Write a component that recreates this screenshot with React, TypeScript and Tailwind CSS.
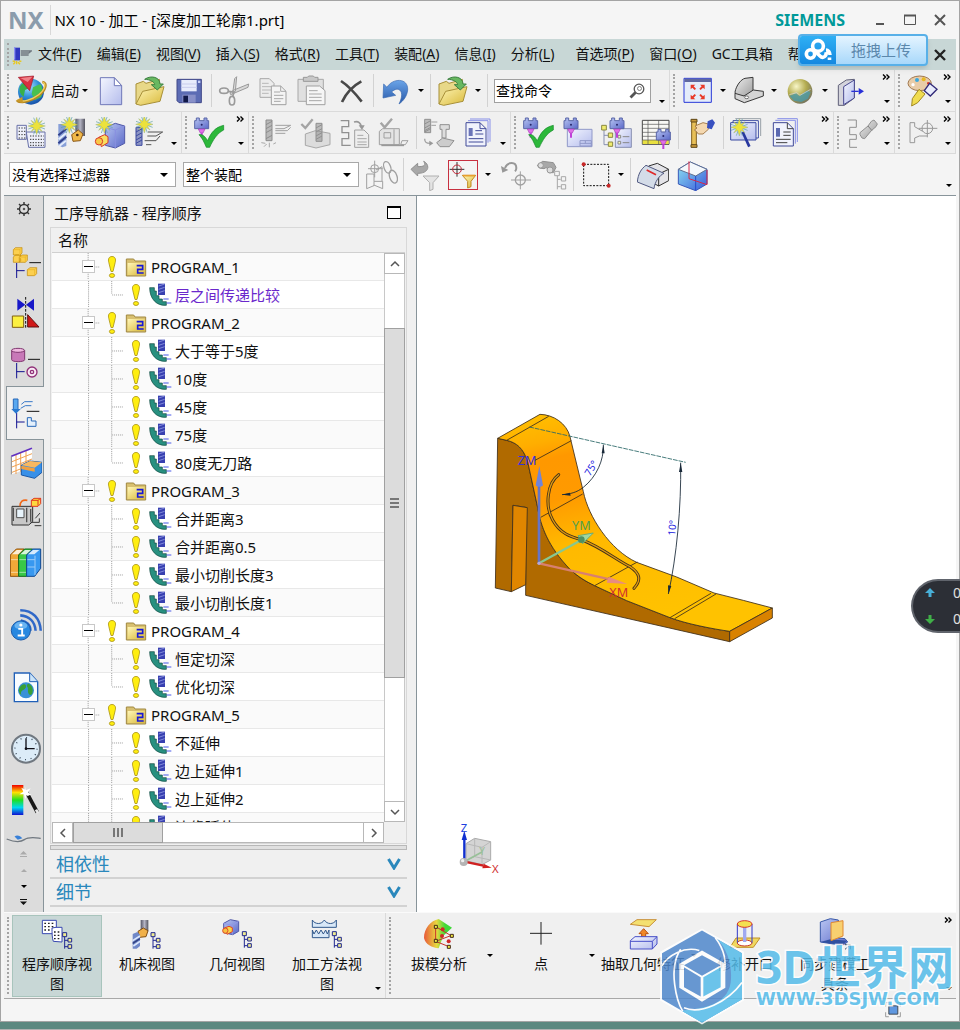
import type { ReactNode } from "react";

// Shared svg wrapper, all toolbar art is drawn on a 96 unit grid
function Art({
  vb,
  className = "size-8",
  children,
}: {
  vb: string;
  className?: string;
  children: ReactNode;
}) {
  return (
    <svg viewBox={vb} className={`shrink-0 ${className}`} fill="none" strokeWidth={3} aria-hidden="true">
      {children}
    </svg>
  );
}

function Gradients() {
  return (
    <svg className="absolute size-0" aria-hidden="true">
      <defs>
        <linearGradient id="blue" x1="0" y1="0" x2="1" y2="1">
          <stop offset="0" stopColor="#b9c6f2" />
          <stop offset="1" stopColor="#5a68c8" />
        </linearGradient>
        <linearGradient id="pale" x1="0" y1="0" x2="1" y2="1">
          <stop offset="0" stopColor="#f4f6ff" />
          <stop offset="1" stopColor="#b4bcec" />
        </linearGradient>
        <linearGradient id="gold" x1="0" y1="0" x2="1" y2="1">
          <stop offset="0" stopColor="#fff6b8" />
          <stop offset="1" stopColor="#d8b838" />
        </linearGradient>
        <linearGradient id="grey" x1="0" y1="0" x2="1" y2="1">
          <stop offset="0" stopColor="#eeeeee" />
          <stop offset="1" stopColor="#9a9a9a" />
        </linearGradient>
        <linearGradient id="steel" x1="0" y1="0" x2="1" y2="0">
          <stop offset="0" stopColor="#555566" />
          <stop offset="0.5" stopColor="#b4b4c4" />
          <stop offset="1" stopColor="#555560" />
        </linearGradient>
        <radialGradient id="globe" cx="0.4" cy="0.3" r="0.8">
          <stop offset="0" stopColor="#a8e4ff" />
          <stop offset="0.5" stopColor="#2f8fd8" />
          <stop offset="1" stopColor="#12409a" />
        </radialGradient>
        <radialGradient id="ball" cx="0.35" cy="0.3" r="0.8">
          <stop offset="0" stopColor="#f8f6c8" />
          <stop offset="0.5" stopColor="#b4ac50" />
          <stop offset="1" stopColor="#6a6a60" />
        </radialGradient>
        <linearGradient id="undo" x1="0" y1="0" x2="0" y2="1">
          <stop offset="0" stopColor="#6aa4e8" />
          <stop offset="1" stopColor="#2858a8" />
        </linearGradient>
        <linearGradient id="ice" x1="0" y1="0" x2="1" y2="1">
          <stop offset="0" stopColor="#8fe4f4" />
          <stop offset="1" stopColor="#3a5ad8" />
        </linearGradient>
        <linearGradient id="rainbow" x1="0" y1="0" x2="0" y2="1">
          <stop offset="0" stopColor="#f00000" />
          <stop offset="0.25" stopColor="#ffe000" />
          <stop offset="0.5" stopColor="#20e020" />
          <stop offset="0.75" stopColor="#00d8f0" />
          <stop offset="1" stopColor="#1010d0" />
        </linearGradient>
        <linearGradient id="draft" x1="0" y1="0" x2="1" y2="0">
          <stop offset="0" stopColor="#e85838" />
          <stop offset="0.45" stopColor="#e8d840" />
          <stop offset="0.75" stopColor="#40d838" />
        </linearGradient>
        <linearGradient id="face" x1="0" y1="0" x2="0.3" y2="1">
          <stop offset="0" stopColor="#ffc400" />
          <stop offset="0.16" stopColor="#ffae00" />
          <stop offset="0.24" stopColor="#ff9800" />
          <stop offset="0.42" stopColor="#ff9a00" />
          <stop offset="0.62" stopColor="#ffb900" />
          <stop offset="1" stopColor="#ffc200" />
        </linearGradient>
      </defs>
    </svg>
  );
}

/* ---------- small motifs reused by several icons ---------- */

function Spark({ x, y }: { x: number; y: number }) {
  return (
    <g transform={`translate(${x} ${y})`}>
      <path d="M-25-9L25 9M-9-25L9 25M-25 9L25-9M-9 25L9-25" stroke="#5aa0a4" strokeWidth={2} />
      <path
        d="M0-26L5-9L17-17L9-5L26 0L9 5L17 17L5 9L0 26L-5 9L-17 17L-9 5L-26 0L-9-5L-17-17L-5-9Z"
        fill="#ece23c"
        stroke="#7aa078"
        strokeWidth={1}
      />
    </g>
  );
}

function Head({ x, y }: { x: number; y: number }) {
  return (
    <g transform={`translate(${x} ${y})`}>
      <path d="M-21 6h5v-8h9v8h14v-8h9v8h5v24h-42z" fill="url(#blue)" stroke="#5a66a8" />
      <circle cx={0} cy={18} r={3} fill="#28286a" />
      <path d="M-10 31h20l-6 12h-8z" fill="#e070e8" stroke="#a840b8" strokeWidth={2} />
      <path d="M0 43v14" stroke="#c040d8" strokeWidth={6} />
    </g>
  );
}

function Check({ x, y }: { x: number; y: number }) {
  return (
    <path
      transform={`translate(${x} ${y})`}
      d="M-32-6c12-2 18 6 26 18C4-12 16-28 42-34v14C22-10 10 10 0 32h-10c-6-14-12-28-22-38z"
      fill="#2cb83a"
      stroke="#148a28"
      strokeWidth={2}
    />
  );
}

function NodeTree({ x, y }: { x: number; y: number }) {
  return (
    <g transform={`translate(${x} ${y})`} stroke="#202890">
      <path d="M7 13v36M7 24h10M7 43h10" />
      <g fill="#f0ec90">
        <path d="M1 1h12v12H1zM17 18h11v11H17zM17 37h11v11H17z" />
      </g>
    </g>
  );
}

function Drill({ x, y, h, tone }: { x: number; y: number; h: number; tone: string }) {
  return (
    <g transform={`translate(${x} ${y})`}>
      <path d={`M0 0h18v${h}h-18z`} fill={tone} fillOpacity={0.55} stroke={tone} />
      <path d={`M0 14l18-10M0 26l18-10M0 38l18-10M0 ${h - 6}l18-10`} stroke={tone} />
    </g>
  );
}

function FolderOpen({ x }: { x: number }) {
  return (
    <Art vb={`${x} 225 96 96`}>
      <g transform={`translate(${x + 4} 0)`}>
        <path d="M2 312V252l22-8 8 6 40-12v20z" fill="#e8d888" stroke="#a89038" />
        <path d="M2 312l20-38 64-14-12 44-58 12z" fill="url(#gold)" stroke="#a89038" />
        <path d="M28 238c20-14 46-6 46 14h10l-18 18-18-16h10c0-8-14-16-30-16z" fill="#68b860" stroke="#3c8040" />
      </g>
    </Art>
  );
}

/* ---------- toolbar building blocks ---------- */

function Grip() {
  return (
    <span className="flex w-2 shrink-0 justify-center self-stretch py-1">
      <span className="border-l-2 border-dotted border-[#a4a4a4]" />
    </span>
  );
}

function Separator() {
  return (
    <span className="flex w-1.5 shrink-0 justify-center self-stretch py-1">
      <span className="border-l border-[#d2d2d2]" />
    </span>
  );
}

function Caret() {
  return (
    <svg viewBox="0 0 6 3" className="h-[3px] w-1.5 shrink-0 text-black" aria-hidden="true">
      <path d="M0 0h6L3 3z" fill="currentColor" />
    </svg>
  );
}

function Drop({ label, className = "w-3" }: { label: string; className?: string }) {
  return (
    <button type="button" aria-label={label} className={`flex h-8 shrink-0 items-center justify-center ${className}`}>
      <Caret />
    </button>
  );
}

function Tool({
  label,
  className = "w-[39px]",
  children,
}: {
  label: string;
  className?: string;
  children: ReactNode;
}) {
  return (
    <button type="button" aria-label={label} className={`flex h-9 shrink-0 items-center justify-center ${className}`}>
      {children}
    </button>
  );
}

function Overflow({ more = false, className = "w-[13px]" }: { more?: boolean; className?: string }) {
  return (
    <button
      type="button"
      aria-label="工具条选项"
      className={`flex shrink-0 flex-col items-end self-stretch pt-1 pr-1 pb-2 ${
        more ? "justify-between" : "justify-end"
      } ${className}`}
    >
      {more && (
        <svg viewBox="0 0 8 6" className="h-1.5 w-2" fill="none" stroke="#000" strokeWidth={1.4} aria-hidden="true">
          <path d="M1 0.5L3.5 3L1 5.5M4.5 0.5L7 3L4.5 5.5" />
        </svg>
      )}
      <Caret />
    </button>
  );
}

function Group({ className = "", children }: { className?: string; children: ReactNode }) {
  return (
    <div role="toolbar" className={`flex items-center border-r border-[#dadada] ${className}`}>
      {children}
    </div>
  );
}

/* ---------- title and menu ---------- */

function TitleBar() {
  return (
    <header className="flex h-[38px] shrink-0 items-center pr-px pl-1">
      <span className="text-[24px] leading-8 font-bold text-[#8b9cac]">NX</span>
      <span className="ml-1.5 h-[30px] border-l border-[#d8d8d8]" />
      <h1 className="ml-1 grow text-[15px] leading-6 text-black">NX 10 - 加工 - [深度加工轮廓1.prt]</h1>
      <span className="text-base leading-6 font-bold text-[#009999]">SIEMENS</span>
      <div className="ml-5 flex text-[#555]">
        <button type="button" aria-label="最小化" className="flex h-5 w-[30px] items-center justify-center">
          <svg viewBox="0 0 12 12" className="size-3" stroke="currentColor" strokeWidth={2} aria-hidden="true">
            <path d="M2 10h8" />
          </svg>
        </button>
        <button type="button" aria-label="最大化" className="flex h-5 w-[30px] items-center justify-center">
          <svg viewBox="0 0 12 12" className="size-3" fill="none" stroke="currentColor" aria-hidden="true">
            <path d="M0.5 1.5h11v9H0.5z" />
            <path d="M0 1.5h12" strokeWidth={2} />
          </svg>
        </button>
        <button type="button" aria-label="关闭" className="flex h-5 w-[30px] items-center justify-center">
          <svg viewBox="0 0 12 12" className="size-3" stroke="currentColor" strokeWidth={2} aria-hidden="true">
            <path d="M1 1l10 10M11 1L1 11" />
          </svg>
        </button>
      </div>
    </header>
  );
}

const menus = [
  { name: "文件", key: "F" },
  { name: "编辑", key: "E" },
  { name: "视图", key: "V" },
  { name: "插入", key: "S" },
  { name: "格式", key: "R" },
  { name: "工具", key: "T" },
  { name: "装配", key: "A" },
  { name: "信息", key: "I" },
  { name: "分析", key: "L" },
  { name: "首选项", key: "P", spaced: true },
  { name: "窗口", key: "O" },
  { name: "GC工具箱", key: "" },
  { name: "帮助", key: "H" },
];

function MenuBar() {
  return (
    <nav className="relative flex h-[31px] shrink-0 items-center bg-[#c8d7d6]">
      <Grip />
      <Art vb="36 132 60 60" className="size-5">
        <path d="M42 140h18v38H42z" fill="#3038c0" />
        <path d="M44 138v38" stroke="#8c94f0" strokeWidth={4} />
        <path d="M62 150h32l-8 6H62M62 162h24" stroke="#707880" strokeWidth={4} />
        <path d="M38 180l8 2M50 180v10M64 180l-6 2M40 190l6-6M60 190l-6-6" stroke="#e8c820" strokeWidth={4} />
      </Art>
      <ul className="ml-1.5 flex gap-[15px] pb-0.5 text-sm leading-5 whitespace-nowrap text-[#111]">
        {menus.map((menu) => (
          <li key={menu.name} className={menu.spaced ? "ml-1.5" : ""}>
            <button type="button">
              {menu.name}
              {menu.key && (
                <>
                  (<u className="underline-offset-2">{menu.key}</u>)
                </>
              )}
            </button>
          </li>
        ))}
      </ul>

      {/* Cloud drive drop target floating over the menu */}
      <button
        type="button"
        className="absolute -top-[5px] right-7 flex h-8 w-[130px] overflow-hidden rounded border-2 border-[#58b0e8] bg-gradient-to-b from-[#e4f4ff] to-[#a8d8fa] shadow-md"
      >
        <span className="flex h-full w-9 items-center justify-center bg-gradient-to-b from-[#2fb0f4] to-[#1488e0]">
          <svg viewBox="0 0 28 24" className="h-6 w-7" fill="none" stroke="#fff" strokeWidth={3.6} aria-hidden="true">
            <circle cx={6.500} cy={16} r={4.200} />
            <circle cx={14} cy={8} r={5.4} />
            <path d="M11 13l5 5c3 3 7 0 6-4M22 12c2 0 4 2 4 5" />
            <path d="M25.500 19.500v2.500" />
          </svg>
        </span>
        <span className="grow self-center text-[15px] leading-5 text-[#5c88ac]">拖拽上传</span>
      </button>

      <button type="button" aria-label="关闭部件" className="absolute right-2.5 flex size-3 items-center justify-center">
        <svg viewBox="0 0 12 12" className="size-3" stroke="#222" strokeWidth={2.4} aria-hidden="true">
          <path d="M1 1l10 10M11 1L1 11" />
        </svg>
      </button>
    </nav>
  );
}

/* ---------- toolbars ---------- */

function StandardRow() {
  return (
    <div className="flex h-[42px] shrink-0 border-b border-[#dadada] bg-[#f0f0f0]">
      <Group>
        <Grip />
        <button type="button" className="flex h-9 w-[79px] shrink-0 items-center pl-[3px] text-sm leading-5 text-[#111]">
          <Art vb="44 225 96 96">
            <circle cx={92} cy={275} r={39} fill="url(#globe)" />
            <path d="M58 262c6-14 22-22 34-16l-4 18-14 6-4 20c-8-4-14-14-12-28z" fill="#38b048" />
            <path d="M98 262l22-10c8 10 8 28 2 40l-18 8-10-18z" fill="#48c050" />
            <path d="M50 302c14 10 46 0 66-16s26-38 10-40" stroke="#b88820" strokeWidth={8} />
            <path d="M52 300c16 8 44-2 63-16s24-34 12-37" stroke="#f0d060" strokeWidth={4} />
            <path d="M46 302l20-12 2 20z" fill="#c89828" />
            <path d="M54 232l46-4-4 16-8 28z" fill="#d83040" stroke="#9c1828" strokeWidth={2} />
            <path d="M60 234l36-4-14 16z" fill="#f08088" />
          </Art>
          <span className="mr-[3px] ml-1">启动</span>
          <Caret />
        </button>
        <Tool label="新建">
          <Art vb="283 225 96 96">
            <path d="M299 233h42l22 24v57h-64z" fill="url(#pale)" stroke="#7078b8" />
            <path d="M341 233v24h22z" fill="#fff" stroke="#7078b8" />
          </Art>
        </Tool>
        <Tool label="打开">
          <FolderOpen x={400} />
        </Tool>
        <Tool label="保存">
          <Art vb="517 225 96 96">
            <path d="M529 238h73v70h-67l-6-6z" fill="#5c6cb4" stroke="#404888" />
            <path d="M542 240h46v34h-46z" fill="#e8ecfc" />
            <path d="M542 252h46M542 262h46" stroke="#c8ccec" />
            <path d="M545 284h40v24h-40z" fill="#8890c8" />
            <path d="M548 287h14v20h-14z" fill="#101848" />
            <path d="M592 242h7v7h-7z" fill="#c8d0f8" />
          </Art>
        </Tool>
        <Separator />
        <Tool label="剪切">
          <Art vb="652 225 96 96">
            <path d="M708 230l-4 44-8 6 6-44zM744 252l-44 18-12 8 2 6 52-22z" fill="#d8d8d8" stroke="#9a9a9a" />
            <ellipse cx={670} cy={272} rx={13} ry={8} stroke="#9a9a9a" strokeWidth={5} />
            <ellipse cx={694} cy={302} rx={8} ry={13} stroke="#9a9a9a" strokeWidth={5} />
            <path d="M682 274l18 2-4 14" stroke="#9a9a9a" strokeWidth={5} />
          </Art>
        </Tool>
        <Tool label="复制">
          <Art vb="769 225 96 96">
            <path d="M778 236h28l14 14v42h-42z" fill="#ececec" stroke="#a8a8a8" />
            <path d="M784 250h20M784 260h28M784 270h28M784 280h20" stroke="#b8b8b8" />
            <path d="M812 258h28l16 16v40h-44z" fill="#f4f4f4" stroke="#a0a0a0" />
            <path d="M840 258v16h16M820 276h18M820 286h28M820 296h28M820 304h20" stroke="#a8a8a8" />
          </Art>
        </Tool>
        <Tool label="粘贴">
          <Art vb="886 225 96 96">
            <path d="M892 238h76v66h-76z" fill="#e0e0e0" stroke="#a8a8a8" />
            <path d="M908 232h12l4-4h14l4 4h10v12h-44z" fill="#c8c8c8" stroke="#989898" />
            <path d="M917 258h40l16 14v42h-56z" fill="#f6f6f6" stroke="#a0a0a0" />
            <path d="M925 272h26M925 282h38M925 292h38M925 302h38" stroke="#a8a8a8" />
          </Art>
        </Tool>
        <Tool label="删除">
          <Art vb="1003 225 96 96">
            <path d="M1021 243c22 14 42 36 62 62M1082 244c-26 14-46 36-58 62" stroke="#484848" strokeWidth={8} />
          </Art>
        </Tool>
        <Separator />
        <Tool label="撤销">
          <Art vb="1138 225 96 96">
            <path
              d="M1149 252l10 10c16-28 64-30 62 8-2 18-12 32-26 42 8-16 12-34 2-42-8-6-18 0-24 6l12 10-38 8z"
              fill="url(#undo)"
              stroke="#3868b0"
              strokeWidth={2}
            />
          </Art>
        </Tool>
        <Drop label="撤销列表" />
        <Separator />
        <Tool label="打开部件">
          <FolderOpen x={1309} />
        </Tool>
        <Drop label="最近部件" />
        <Separator />
        <label className="ml-1 flex h-6 w-[157px] shrink-0 items-center border border-[#a0a0a0] bg-white px-px">
          <input
            type="text"
            aria-label="查找命令"
            placeholder="查找命令"
            className="min-w-0 grow bg-transparent text-sm leading-5 outline-none placeholder:text-black"
          />
          <svg viewBox="0 0 16 16" className="mr-1 size-4 shrink-0" fill="none" stroke="#555" aria-hidden="true">
            <circle cx={10} cy={6} r={4.800} strokeWidth={1.3} />
            <circle cx={10.500} cy={5.500} r={2} strokeWidth={0.7} />
            <path d="M6.500 9.500l-5 5" strokeWidth={2.8} />
          </svg>
        </label>
        <Overflow className="w-[18px]" />
      </Group>

      <Group className="grow">
        <Grip />
        <Tool label="适合窗口">
          <Art vb="604 225 96 96">
            <path d="M610 235h82v72h-82z" fill="#e4ecfa" stroke="#2838d8" />
            <path d="M611 236h80v10h-80z" fill="#6068a0" />
            <g fill="#e83828">
              <path d="M630 254h14l-5 5 7 7-4 4-7-7-5 5zM672 254v14l-5-5-7 7-4-4 7-7-5-5zM630 298v-14l5 5 7-7 4 4-7 7 5 5zM672 298h-14l5-5-7-7 4-4 7 7 5-5z" />
            </g>
          </Art>
        </Tool>
        <Drop label="适合窗口选项" />
        <Tool label="着色">
          <Art vb="757 225 96 96">
            <path d="M763 276c4-20 18-38 30-41l24-3v44l-26 12-24 6z" fill="url(#grey)" stroke="#383838" />
            <path d="M763 280v16l28 12 57-20v-14l-30-4-28 18z" fill="#d4d4d4" stroke="#383838" />
            <ellipse cx={798} cy={292} rx={6} ry={4} fill="#fff" stroke="#383838" strokeWidth={2} />
          </Art>
        </Tool>
        <Drop label="着色选项" />
        <Tool label="真实着色">
          <Art vb="910 225 96 96">
            <circle cx={958} cy={274} r={37} fill="url(#ball)" />
            <path d="M926 288l20-8 10 8 22-16 12 4-8 20-20 10-22-4z" fill="#4a98a8" fillOpacity={0.8} />
            <path d="M926 284l22-6 10 8 32-18" stroke="#d0d8e8" strokeWidth={2} />
          </Art>
        </Tool>
        <Drop label="真实着色选项" />
        <Tool label="剪切截面">
          <Art vb="1069 225 96 96">
            <path d="M1079 256l24-16 24-2v56l-30 22h-18z" fill="#d4d4dc" stroke="#606078" />
            <path d="M1095 260l32-20v54l-32 20z" fill="url(#pale)" stroke="#484890" />
            <path d="M1118 274h22" stroke="#2830d8" strokeWidth={4} />
            <path d="M1140 264l16 10-16 10z" fill="#2830d8" />
          </Art>
        </Tool>
        <Overflow more className="ml-auto w-[18px]" />
      </Group>

      <Group>
        <Grip />
        <Tool label="编辑显示">
          <Art vb="1276 225 96 96">
            <ellipse cx={1314} cy={250} rx={35} ry={22} fill="#e8cca8" stroke="#a07850" />
            <circle cx={1306} cy={240} r={6} fill="#38a8e0" />
            <circle cx={1326} cy={238} r={6} fill="#e8b820" />
            <circle cx={1294} cy={254} r={5} fill="#fff" />
            <circle cx={1340} cy={250} r={4} fill="#d83828" />
            <path d="M1344 250l22 18-20 20-18-16z" fill="#e8ecfc" stroke="#302878" strokeWidth={4} />
            <path d="M1312 268l18 14-22 26-18 10 2-22z" fill="#f0dc50" stroke="#a08820" />
          </Art>
        </Tool>
        <Overflow more />
      </Group>
    </div>
  );
}

function MachiningRow() {
  return (
    <div className="flex h-[42px] shrink-0 border-b border-[#dadada] bg-[#f0f0f0]">
      <Group>
        <Grip />
        <Tool label="创建程序">
          <Art vb="46 21 96 96">
            <path d="M49 46h28v42H49z" fill="#eef0fa" stroke="#6870a8" />
            <path d="M77 66h56v46H84z" fill="#eef0fa" stroke="#6870a8" />
            <path d="M54 54h22M54 64h22M54 74h22M54 84h22" stroke="#333" strokeDasharray="4 4" />
            <path d="M88 78h42M88 88h42M88 98h42M88 106h42" stroke="#333" strokeDasharray="4 4" />
            <Spark x={108} y={48} />
          </Art>
        </Tool>
        <Tool label="创建刀具">
          <Art vb="163 21 96 96">
            <path d="M224 26h29v52h-22l-7-16z" fill="url(#steel)" />
            <path d="M213 74l20-14 14 12-8 20-22 2z" fill="#f0b848" stroke="#8a5818" />
            <circle cx={230} cy={75} r={4} fill="#40280c" />
            <path d="M173 42h24v66l-12 4-12-6z" fill="#88a0d8" />
            <path d="M173 76l24-20M173 100l24-20" stroke="#30408c" strokeWidth={6} />
            <path d="M174 88l22-18M176 108l20-16" stroke="#e4ecfc" strokeWidth={6} />
            <Spark x={206} y={44} />
          </Art>
        </Tool>
        <Tool label="创建几何体">
          <Art vb="280 21 96 96">
            <path d="M314 52l30-12 28 8v52l-28 14-30-8z" fill="url(#blue)" stroke="#5058a8" />
            <path d="M314 52l30 8 28-12M344 60v54" stroke="#8890e0" />
            <path d="M294 82l18-8 10 6v18l-20 12z" fill="#f8e060" stroke="#d83828" />
            <circle cx={295} cy={94} r={11} fill="#f8c848" stroke="#d83828" />
            <Spark x={311} y={44} />
          </Art>
        </Tool>
        <Tool label="创建工序">
          <Art vb="399 21 96 96">
            <Drill x={408} y={52} h={54} tone="#3c4aa0" />
            <path d="M444 66h44l-20 12h-26M434 92h34l12-14M438 104h16" stroke="#555" />
            <Spark x={433} y={43} />
          </Art>
        </Tool>
        <Overflow />
      </Group>

      <Group>
        <Grip />
        <Tool label="确认刀轨">
          <Art vb="580 21 96 96">
            <Head x={603} y={26} />
            <Check x={627} y={80} />
          </Art>
        </Tool>
        <Overflow more className="w-[19px]" />
      </Group>

      <Group>
        <Grip />
        <Tool label="生成刀轨">
          <Art vb="781 21 96 96">
            <Drill x={796} y={30} h={62} tone="#8c8c8c" />
            <path d="M824 46h46l-20 10h-26M824 70h30M824 62h36l10-10" stroke="#a0a0a0" />
            <path d="M782 98l12 2M806 98v14M826 98l-8 4M790 110l8-8" stroke="#a8a8a8" />
          </Art>
        </Tool>
        <Tool label="过切检查">
          <Art vb="898 21 96 96">
            <path d="M914 72l30-10 44 8v34l-42 10-32-8z" fill="#dcdcdc" stroke="#a8a8a8" />
            <Drill x={946} y={40} h={54} tone="#909090" />
            <path d="M902 42l12 12 22-26" stroke="#a4a4a4" strokeWidth={7} />
          </Art>
        </Tool>
        <Tool label="列出刀轨">
          <Art vb="1015 21 96 96">
            <path d="M1020 32h24v18h-20v18h20v18h-20v20h26" stroke="#909090" strokeWidth={4} />
            <path d="M1062 60h28l14 14v38h-42z" fill="#eee" stroke="#a0a0a0" />
            <path d="M1070 76h18M1070 86h28M1070 96h28M1070 104h28" stroke="#a8a8a8" />
            <path d="M1060 36c14-4 20 4 22 14" stroke="#989898" strokeWidth={5} />
            <path d="M1074 46h18l-8 14z" fill="#989898" />
          </Art>
        </Tool>
        <Tool label="机床仿真">
          <Art vb="1132 21 96 96">
            <path d="M1136 64l10-8h50v48h-60z" fill="#e4e4e4" stroke="#a0a0a0" />
            <path d="M1150 68h20v16h-20zM1180 58v46M1204 92h18l-8 12h-14z" stroke="#a0a0a0" />
            <path d="M1142 106h68" stroke="#999" strokeWidth={5} />
            <path d="M1140 38l12 14 22-26" stroke="#a4a4a4" strokeWidth={7} />
          </Art>
        </Tool>
        <Separator />
        <Tool label="后处理">
          <Art vb="1267 21 96 96">
            <Drill x={1272} y={28} h={40} tone="#909090" />
            <path d="M1292 36h18M1292 46h14" stroke="#a0a0a0" />
            <path d="M1318 44h28v14h-10v26h-12V58h-6z" fill="#ddd" stroke="#909090" />
            <path d="M1308 98l18-14 34 8-14 18h-28z" fill="#ccc" stroke="#909090" />
            <path d="M1272 86c0 12 6 14 16 14" stroke="#a0a0a0" strokeWidth={4} />
            <path d="M1286 92l12 8-12 8z" fill="#989898" />
          </Art>
        </Tool>
        <Tool label="车间文档">
          <Art vb="1384 21 96 96">
            <path d="M1408 27h60v68M1402 32h60v66" stroke="#8890e8" />
            <path d="M1396 38h42l18 18v52h-60z" fill="#f0f2fc" stroke="#404a98" />
            <path d="M1438 38v18h18M1424 62h20M1424 72h24M1404 86h44M1404 96h44" stroke="#404a98" />
            <path d="M1404 54h12v24h-12z" fill="#6a74b8" />
          </Art>
        </Tool>
        <Overflow />
      </Group>

      <Group className="grow">
        <Grip />
        <Tool label="确认">
          <Art vb="127 21 96 96">
            <Head x={150} y={26} />
            <Check x={176} y={80} />
          </Art>
        </Tool>
        <Tool label="创建机床">
          <Art vb="244 21 96 96">
            <path d="M260 58h74v52h-74z" fill="url(#pale)" stroke="#9098c8" />
            <path d="M298 92h34v16h-34zM298 100h34M314 92v8" stroke="#9098c8" />
            <Head x={271} y={26} />
          </Art>
        </Tool>
        <Tool label="机床导航">
          <Art vb="361 21 96 96">
            <path d="M370 60v44h12M370 76h12" stroke="#8890b0" />
            <path d="M404 56h48v56h-48z" fill="url(#pale)" stroke="#8890b0" />
            <path d="M363 46h14v14h-14zM383 69h13v13h-13zM383 96h13v13h-13z" fill="#f0ec70" stroke="#8a8840" />
            <path d="M412 76h8v8h-8zM412 94h8v8h-8z" fill="#f8f8c0" stroke="#888" />
            <path d="M426 80h20M426 98h20" stroke="#888" />
            <Head x={409} y={26} />
          </Art>
        </Tool>
        <Tool label="刀具表">
          <Art vb="478 21 96 96">
            <path d="M485 31h80v72h-80z" fill="#f8f8f4" stroke="#484848" />
            <path d="M486 90h78v12h-78z" fill="#e8e040" />
            <path d="M485 43h80M485 55h80M485 67h80M485 79h80M485 90h80M502 31v72M534 31v72" stroke="#555" strokeWidth={2} />
            <Head x={548} y={60} />
          </Art>
        </Tool>
        <Separator />
        <Tool label="测量">
          <Art vb="616 21 96 96">
            <path d="M636 30h14v80h-14z" fill="#e8c058" stroke="#806020" />
            <path d="M634 28h18v8h-18zM634 104h18v8h-18z" fill="#c89838" stroke="#604818" />
            <path d="M646 48l24-10 16 4v16l-16 14h-14l-6-8-6-4 8-6z" fill="#f4d8b0" stroke="#a88050" />
            <path d="M684 34l14-6 8 10-10 20-14-4z" fill="#3850c0" />
          </Art>
        </Tool>
        <Separator />
        <Tool label="向导">
          <Art vb="748 21 96 96">
            <path d="M764 26h76v52" fill="none" stroke="#98a0a8" />
            <path d="M757 32h76v52h-76z" fill="#fff" stroke="#3848a0" />
            <path d="M750 38h76v52h-76z" fill="url(#pale)" stroke="#3848a0" />
            <path d="M786 66l20 44" stroke="#2838a0" strokeWidth={8} />
            <Spark x={776} y={52} />
          </Art>
        </Tool>
        <Tool label="文档">
          <Art vb="865 21 96 96">
            <path d="M890 26h60v70M884 31h60v70" stroke="#8890e8" />
            <path d="M878 38h42l18 18v52h-60z" fill="#f0f2fc" stroke="#404a98" />
            <path d="M920 38v18h18M908 66h22M886 88h44M886 98h34M908 76h22" stroke="#404040" />
            <path d="M886 54h12v26h-12z" fill="#5a68b0" />
          </Art>
        </Tool>
        <Overflow more className="ml-auto w-[18px]" />
      </Group>

      <Group>
        <Grip />
        <Tool label="查看刀轨">
          <Art vb="1096 21 96 96">
            <path d="M1101 30h26v22h-20v22h20v14h-20v24h22" stroke="#909090" />
            <path d="M1138 68l24-20 10-14 8-4 10 12-4 8-14 12-20 24-8-2-6-10z" fill="url(#grey)" stroke="#909090" />
            <path d="M1162 48l12 14" stroke="#808080" />
          </Art>
        </Tool>
        <Overflow more />
      </Group>

      <Group>
        <Grip />
        <Tool label="点捕捉">
          <Art vb="1279 21 96 96">
            <path d="M1288 38h14v12l24 14M1288 38v60h14V84l14-6h24M1340 30v52M1314 55h56" stroke="#989898" />
            <circle cx={1340} cy={55} r={16} stroke="#989898" />
          </Art>
        </Tool>
        <Overflow more />
      </Group>
    </div>
  );
}

function FilterSelect({ label, value, className }: { label: string; value: string; className: string }) {
  return (
    <span className={`relative flex h-[25px] shrink-0 items-center ${className}`}>
      <select
        aria-label={label}
        className="size-full appearance-none border border-[#a8a8a8] bg-white px-0.5 text-sm leading-5 text-black"
      >
        <option>{value}</option>
      </select>
      <svg viewBox="0 0 8 4" className="pointer-events-none absolute right-2 h-1 w-2" aria-hidden="true">
        <path d="M0 0h8L4 4z" fill="#000" />
      </svg>
    </span>
  );
}

function SelectionRow() {
  return (
    <div className="flex h-[41px] shrink-0 items-center bg-[#f4f4f4] pl-[5px]">
      <FilterSelect label="类型过滤器" value="没有选择过滤器" className="w-[167px]" />
      <FilterSelect label="选择范围" value="整个装配" className="ml-[7px] w-[176px]" />
      <Tool label="装配约束" className="ml-[5px] w-9">
        <Art vb="1098 145 96 96">
          <path d="M1124 150v50M1104 174h44M1100 190h22v22h26v22l-24-10-24 10zM1122 212v14M1128 178l18-10v44" stroke="#a0a0a0" />
          <circle cx={1124} cy={174} r={12} stroke="#a0a0a0" />
          <ellipse cx={1162} cy={170} rx={10} ry={18} stroke="#a0a0a0" strokeWidth={4} transform="rotate(-20 1162 170)" />
          <ellipse cx={1180} cy={198} rx={11} ry={20} stroke="#a0a0a0" strokeWidth={4} transform="rotate(-20 1180 198)" />
        </Art>
      </Tool>
      <Separator />
      <Tool label="重置过滤器" className="w-9">
        <Art vb="1229 145 96 96">
          <path d="M1238 176l20-18v10c20 0 26-4 18-16 18 8 20 36-18 36v8z" fill="#a8a8a8" stroke="#909090" />
          <path d="M1274 196h48l-18 20v20l-10 4v-24z" fill="#e4e4e4" stroke="#b0b0b0" />
        </Art>
      </Tool>
      <button
        type="button"
        aria-label="常规选择过滤器"
        className="ml-1.5 flex size-[30px] shrink-0 items-center justify-center border border-[#c83040]"
      >
        <Art vb="1348 153 84 84" className="size-7">
          <path d="M1372 156v44M1350 178h44" stroke="#303030" />
          <circle cx={1372} cy={178} r={13} stroke="#c02838" />
          <path d="M1388 196h40l-14 18v16l-10 4v-20z" fill="url(#gold)" stroke="#c08820" />
          <path d="M1390 197h36" stroke="#e8a030" strokeWidth={5} />
        </Art>
      </button>
      <Drop label="过滤器选项" className="w-5" />
      <Tool label="重置方位" className="w-9">
        <Art vb="51 145 96 96">
          <path d="M112 182v54M84 208h60" stroke="#a0a0a0" />
          <circle cx={112} cy={208} r={15} stroke="#a0a0a0" strokeWidth={4} />
          <path d="M66 172c8-20 34-20 34 0 0 4-2 8-4 10" stroke="#989898" strokeWidth={6} />
          <path d="M54 166l4 20 18-8z" fill="#989898" />
        </Art>
      </Tool>
      <Tool label="查找组件" className="w-9">
        <Art vb="170 145 96 96">
          <path d="M174 164l16-12 16 2 16 2 8 14-8 16h-14l-6-16-8 4-14-2z" fill="#a8a8a8" stroke="#909090" />
          <circle cx={184} cy={164} r={8} fill="#ddd" stroke="#989898" />
          <circle cx={212} cy={178} r={9} fill="#ddd" stroke="#989898" />
          <path d="M234 196v40M234 206h10M234 228h10" stroke="#a8a8a8" />
          <path d="M226 182h14v13h-14zM246 198h13v13h-13zM246 222h13v13h-13z" fill="#f4f4f4" stroke="#a8a8a8" />
        </Art>
      </Tool>
      <Separator />
      <Tool label="矩形选择">
        <Art vb="303 145 96 96">
          <path d="M314 161h75v64h-75z" stroke="#111" strokeDasharray="6 4" />
          <circle cx={314} cy={161} r={6} fill="#c82828" />
          <circle cx={389} cy={225} r={6} fill="#c82828" />
        </Art>
      </Tool>
      <Drop label="选择方式" />
      <Separator />
      <Tool label="截面">
        <Art vb="475 145 96 96">
          <path d="M510 166l26-8 34 18v34l-30 16-30-16z" fill="#e4e4e8" stroke="#303030" />
          <path d="M540 190l30-14M540 190v36" stroke="#303030" />
          <path d="M502 164l54 24c-14 6-28 26-30 46l-50-20c2-24 12-40 26-50z" fill="#d4dce8" stroke="#505880" />
          <path d="M504 178l28 14" stroke="#e02828" strokeWidth={5} />
        </Art>
      </Tool>
      <Tool label="线框">
        <Art vb="589 145 96 96">
          <path d="M596 176l36-22 50 22v44l-34 20-52-20z" fill="url(#ice)" stroke="#3858b8" />
          <path d="M596 176l36-22 50 22-34 20z" fill="#f4f8fc" stroke="#607090" />
          <path d="M648 196v44" stroke="#2848c8" />
          <path d="M628 152v52l54 18v-44" stroke="#d82848" />
        </Art>
      </Tool>
      <Overflow className="ml-auto w-[18px]" />
    </div>
  );
}

/* ---------- resource bar ---------- */

function RailButton({ label, className = "h-[50px]", children }: { label: string; className?: string; children: ReactNode }) {
  return (
    <button type="button" aria-label={label} className={`flex shrink-0 items-center justify-end pr-px ${className}`}>
      {children}
    </button>
  );
}

function ResourceRail() {
  return (
    <nav className="z-10 flex w-10 shrink-0 flex-col border-r border-[#88949a] bg-[#dcdcdc]">
      <button type="button" aria-label="资源条选项" className="flex h-[42px] shrink-0 justify-center pt-1.5">
        <svg viewBox="0 0 14 14" className="size-3.5" fill="none" stroke="#333" aria-hidden="true">
          <circle cx={7} cy={7} r={4.500} strokeWidth={1.4} />
          <circle cx={7} cy={7} r={0.8} />
          <path d="M7 0v2.500M7 11.500V14M0 7h2.500M11.500 7H14M2 2l2 2M10 10l2 2M12 2l-2 2M4 10l-2 2" strokeWidth={1.400} />
        </svg>
      </button>
      <RailButton label="装配导航器">
        <Art vb="30 158 96 96">
          <path d="M50 206v45M50 229h24" stroke="#101090" />
          <path d="M88 205h35" stroke="#111" />
          <g fill="#fcd050" stroke="#c08808" strokeWidth={2}>
            <path d="M40 166l6-6h20v16l-6 6H40zM40 188l6-6h16v18l-4 4H40zM58 188l6-6h18v16l-6 6H58zM82 226l8-6h20v18l-6 6H82z" />
            <path d="M40 166h20v16M60 166l6-6M58 188h18v16M76 188l6-6M82 226h22v18M104 226l6-6" stroke="#e8b020" />
          </g>
        </Art>
      </RailButton>
      <RailButton label="约束导航器">
        <Art vb="30 305 96 96">
          <path d="M52 310v36l24-18zM102 310v36l-24-18z" fill="#1818c8" />
          <path d="M77 305v96" stroke="#111" strokeDasharray="8 4" />
          <path d="M37 362h34v34H37z" fill="#fcf040" stroke="#806010" />
          <path d="M83 358v37h34z" fill="#d01818" stroke="#601010" />
        </Art>
      </RailButton>
      <RailButton label="部件导航器">
        <Art vb="30 456 96 96">
          <path d="M50 504v46M50 530h24" stroke="#101090" />
          <path d="M84 493h36" stroke="#111" />
          <path d="M35 466v28c0 8 39 8 39 0v-28" fill="#c878b8" stroke="#803870" />
          <ellipse cx={54} cy={466} rx={19.500} ry={6} fill="#f0b8e0" stroke="#803870" />
          <circle cx={96} cy={531} r={15} fill="#f8e8f4" stroke="#903078" strokeWidth={4} />
          <circle cx={96} cy={531} r={5} stroke="#903078" strokeWidth={4} />
        </Art>
      </RailButton>
      <button
        type="button"
        aria-label="工序导航器"
        className="-my-0.5 -mr-px ml-0.5 flex h-[54px] shrink-0 items-center justify-end border-y border-l border-[#88949a] bg-[#f0f0f0] pr-0.5"
      >
        <Art vb="30 606 96 96">
          <path d="M50 654v46M50 681h24" stroke="#101090" />
          <path d="M80 649h38" stroke="#111" />
          <path d="M40 612h14v32h-14z" fill="#58a8f0" stroke="#2868b8" />
          <path d="M34 642h28l-14 14z" fill="#2878d0" />
          <path d="M64 628l10-8h24M62 640l14-8h18" stroke="#3878c8" />
          <path d="M82 668h12v10h14v16H82z" fill="#e4f0fc" stroke="#2868b8" />
        </Art>
      </button>
      <RailButton label="加工特征导航器">
        <Art vb="30 22 96 96">
          <path d="M36 50l60-24v56l-60 22z" fill="#fff" />
          <path d="M36 66l60-24M36 82l60-24M36 98l60-24M48 45v58M62 40v56M78 34v54" stroke="#f0a050" />
          <path d="M34 50v54" stroke="#888" />
          <path d="M34 50l62-24" stroke="#6030c0" strokeWidth={5} />
          <path d="M64 76l26-12 36 4v30l-22 18-40-10z" fill="#3890e8" stroke="#1858a8" />
          <path d="M64 76l26-12 36 4-22 16z" fill="#f8b860" />
          <path d="M64 78l40 8v10l-40-8z" fill="#f0a040" />
        </Art>
      </RailButton>
      <RailButton label="机床导航器">
        <Art vb="30 172 96 96">
          <path d="M36 200h62v46l-12 10H36z" fill="#c8c8c8" stroke="#303030" />
          <path d="M50 208h22v26H50z" fill="#e8f4fc" stroke="#505050" />
          <path d="M40 204v40M80 204v44M92 208v38" stroke="#505050" strokeWidth={4} />
          <path d="M92 248h26v-12M104 258h20M106 236l14-16" stroke="#383838" />
          <path d="M60 200c0-16 8-20 22-18" stroke="#f06818" strokeWidth={5} />
          <path d="M94 182l8-6h20v16l-8 8H94z" fill="#fcd840" stroke="#e03820" />
          <path d="M94 182h20v16M114 182l8-6" stroke="#e03820" />
        </Art>
      </RailButton>
      <RailButton label="重用库">
        <Art vb="30 324 96 96">
          <path d="M31 348l18-18h24l-17 18v64H31z" fill="#f0a838" stroke="#905008" />
          <path d="M56 348l18-18h24l-18 18v64H56z" fill="#38c848" stroke="#106818" />
          <path d="M80 348l18-18h24v58l-18 24H80z" fill="#3898f0" stroke="#104890" />
          <path d="M36 346l14-13h18l-13 13zM61 346l14-13h18l-14 13zM84 346l15-13h19l-15 13z" fill="#fff" fillOpacity={0.8} />
          <path d="M33 362h21M58 362h20M82 362h22M33 400h21M58 400h20M82 384h22M105 350v58" stroke="#fff" strokeOpacity={0.5} />
        </Art>
      </RailButton>
      <RailButton label="HD3D 工具" className="mt-1.5 h-[62px]">
        <Art vb="30 506 96 100">
          <path d="M60 510c40 0 62 26 64 64M60 526c28 2 46 20 48 48M62 542c18 2 30 14 30 32" stroke="#3068c8" strokeWidth={8} />
          <circle cx={62} cy={573} r={30} fill="#2888e0" stroke="#1858a8" />
          <ellipse cx={62} cy={558} rx={20} ry={12} fill="#88c8f8" fillOpacity={0.7} />
          <path d="M54 568h12v20M52 589h22" stroke="#fff" strokeWidth={6} />
          <circle cx={62} cy={556} r={5} fill="#fff" />
        </Art>
      </RailButton>
      <RailButton label="Web 浏览器" className="h-[62px]">
        <Art vb="30 692 96 96">
          <path d="M43 698h46l24 26v60H43z" fill="#f8fcff" stroke="#2060b8" strokeWidth={4} />
          <path d="M89 698v26h24" fill="#cce4f8" stroke="#2060b8" />
          <circle cx={78} cy={750} r={24} fill="#3890d8" />
          <path d="M60 740c6-10 16-10 18-4s-4 10-10 14-6 10-4 14c-8-6-10-16-4-24zM84 730c10 2 16 12 14 24s-8 12-12 6 0-16-4-20 0-8 2-10z" fill="#38a038" />
        </Art>
      </RailButton>
      <RailButton label="历史记录" className="h-[62px]">
        <Art vb="30 130 96 96">
          <circle cx={78} cy={177} r={42} fill="#dcecf8" stroke="#707880" strokeWidth={6} />
          <circle cx={78} cy={177} r={33} stroke="#384858" strokeWidth={4} strokeDasharray="3 14.200" />
          <path d="M78 146v31h26" stroke="#101018" strokeWidth={4} />
          <circle cx={78} cy={177} r={4} fill="#101018" />
        </Art>
      </RailButton>
      <RailButton label="系统材料" className="h-[42px]">
        <Art vb="30 282 96 96">
          <path d="M36 282h34v90H36z" fill="url(#rainbow)" />
          <path d="M80 304l32 60" stroke="#181818" strokeWidth={11} />
          <path d="M82 306l4 8M108 356l6 10" stroke="#e8e8e8" strokeWidth={8} />
          <path d="M74 284l4 14 14-6-8 12 10 8-14 0-4 12-4-14-14 0 12-8-6-12 12 6z" fill="#fff" />
        </Art>
      </RailButton>
      <RailButton label="角色" className="h-6 items-end">
        <Art vb="16 430 110 40" className="h-[14px] w-9">
          <path d="M42 442c8-6 18-2 24 6l-14 4z" fill="#3880d8" />
          <path d="M18 450c20 8 40 12 54 2s34-6 50-4" stroke="#707880" strokeWidth={4} />
        </Art>
      </RailButton>
      <div className="mt-auto mb-0.5 flex shrink-0 flex-col">
        <button type="button" aria-label="滚动到顶部" className="flex h-4 items-center justify-center">
          <svg viewBox="0 0 7 6" className="h-1.5 w-[7px]" fill="#aaa" aria-hidden="true">
            <path d="M0 3.500h7L3.500 0zM0 5h7v1H0z" />
          </svg>
        </button>
        <button type="button" aria-label="向上滚动" className="flex h-4 items-center justify-center">
          <svg viewBox="0 0 6 3" className="h-[3px] w-1.5" fill="#aaa" aria-hidden="true">
            <path d="M0 3h6L3 0z" />
          </svg>
        </button>
        <button type="button" aria-label="向下滚动" className="flex h-4 items-center justify-center">
          <Caret />
        </button>
        <button type="button" aria-label="滚动到底部" className="flex h-4 items-center justify-center">
          <svg viewBox="0 0 7 6" className="h-1.5 w-[7px]" fill="#111" aria-hidden="true">
            <path d="M0 0h7v1H0zM0 2.500h7L3.500 6z" />
          </svg>
        </button>
      </div>
    </nav>
  );
}

/* ---------- operation navigator ---------- */

const programs = [
  { name: "PROGRAM_1", operations: ["层之间传递比较"] },
  { name: "PROGRAM_2", operations: ["大于等于5度", "10度", "45度", "75度", "80度无刀路"] },
  { name: "PROGRAM_3", operations: ["合并距离3", "合并距离0.5", "最小切削长度3", "最小切削长度1"] },
  { name: "PROGRAM_4", operations: ["恒定切深", "优化切深"] },
  { name: "PROGRAM_5", operations: ["不延伸", "边上延伸1", "边上延伸2", "边缘延伸"] },
];

const rows = programs.flatMap((program) => [
  { name: program.name, isProgram: true, last: false },
  ...program.operations.map((name, index) => ({
    name,
    isProgram: false,
    last: index === program.operations.length - 1,
  })),
]);

function Warning() {
  return (
    <svg viewBox="0 0 14 24" className="h-6 w-3.5 shrink-0" aria-hidden="true">
      <path d="M7 1.500c3 0 4.200 2.500 3.200 6L8 16.500H6L3.800 7.500C2.800 4 4 1.500 7 1.500z" fill="#ffee10" stroke="#a89010" strokeWidth={0.8} />
      <ellipse cx={7} cy={20.500} rx={2.600} ry={2} fill="#ffee10" stroke="#a89010" strokeWidth={0.8} />
    </svg>
  );
}

function ProgramRow({ name }: { name: string }) {
  return (
    <>
      <span className="relative flex h-full w-[53px] shrink-0 items-center pl-[30px]">
        <svg viewBox="0 0 53 28" className="absolute inset-0 h-full w-[53px]" stroke="#999" strokeDasharray="1 1" aria-hidden="true">
          <path d="M36.500 0v28M43 14.500h6" />
        </svg>
        <button
          type="button"
          aria-label={`折叠 ${name}`}
          className="relative flex size-[13px] items-center justify-center border border-[#c8c8c8] bg-white"
        >
          <span className="w-[9px] border-t border-black" />
        </button>
      </span>
      <Warning />
      <Art vb="375 185 66 66" className="ml-1.5 size-[22px]">
        <path d="M379 194h22l4 6h32v45h-58z" fill="#d8c070" stroke="#a08840" />
        <path d="M383 206h51v36h-51z" fill="url(#gold)" />
        <path d="M410 214h18v11h-15v11h18" stroke="#1818d8" strokeWidth={5} />
      </Art>
      <span className="ml-1">{name}</span>
    </>
  );
}

function OperationRow({ name, last }: { name: string; last: boolean }) {
  return (
    <>
      <svg viewBox="0 0 77 28" className="h-full w-[77px] shrink-0" stroke="#999" strokeDasharray="1 1" fill="none" aria-hidden="true">
        <path d="M36.500 0v28" />
        <path d={last ? "M60.500 0v14" : "M60.500 0v28"} />
        <path d="M61 14.500h11" />
      </svg>
      <Warning />
      <Art vb="447 265 69 69" className="ml-1.5 size-[23px]">
        <path d="M474 267h21v34h-21z" fill="#3840b0" />
        <path d="M476 274l18-6M476 284l18-6M476 294l18-6" stroke="#a8b0f0" strokeWidth={2} />
        <path d="M449 279h14v10h6v14h8v10h10v8h12v11c-30 2-50-20-50-53z" fill="#289080" stroke="#104840" strokeWidth={2} />
        <path d="M490 313h16M500 325h14" stroke="#4858e8" />
      </Art>
      <span className={name === "层之间传递比较" ? "ml-[3px] text-[#6a28cc]" : "ml-[3px]"}>{name}</span>
    </>
  );
}

const scrollButton = "flex size-[21px] shrink-0 items-center justify-center border border-[#b8b8b8] bg-white";

function Chevron({ d }: { d: string }) {
  return (
    <svg viewBox="0 0 10 10" className="size-2.5" fill="none" stroke="#555" strokeWidth={1.5} aria-hidden="true">
      <path d={d} />
    </svg>
  );
}

function Section({ title }: { title: string }) {
  return (
    <button
      type="button"
      className="flex h-7 shrink-0 items-center justify-between border-b-2 border-[#d2d2d2] pr-1.5 pl-1.5 text-lg leading-6 text-[#2a88bc]"
    >
      {title}
      <svg viewBox="0 0 14 12" className="h-3 w-3.5" fill="none" stroke="currentColor" strokeWidth={3} aria-hidden="true">
        <path d="M1.500 1l5.500 9 5.500-9" />
      </svg>
    </button>
  );
}

function Navigator() {
  return (
    <aside className="flex w-[373px] shrink-0 flex-col border-r border-[#88949a] bg-[#f0f0f0] pr-[9px] pl-1.5 text-[15px] leading-5 text-[#111]">
      <div className="flex h-[31px] shrink-0 items-center justify-between pt-0.5 pr-1.5 pl-1">
        <h2>工序导航器 - 程序顺序</h2>
        <button type="button" aria-label="停靠" className="h-[13px] w-3.5 border border-t-2 border-black bg-white" />
      </div>
      <div className="flex min-h-0 grow flex-col border border-[#d8d8d8] px-px">
        <div className="flex h-[25px] shrink-0 items-center border-b border-[#d0d0d0] pl-1.5">名称</div>
        <div className="flex min-h-0 grow">
          <ul className="min-w-0 grow overflow-hidden bg-white">
            {rows.map((row) => (
              <li key={row.name} className="flex h-7 items-center border-b border-[#e8e8e8] odd:bg-[#fafafa]">
                {row.isProgram ? <ProgramRow name={row.name} /> : <OperationRow name={row.name} last={row.last} />}
              </li>
            ))}
          </ul>
          {/* Vertical scrollbar */}
          <div className="flex w-[21px] shrink-0 flex-col border-x border-[#c8c8c8] bg-white">
            <button type="button" aria-label="上移" className={`-mx-px ${scrollButton}`}>
              <Chevron d="M1 7l4-4 4 4" />
            </button>
            <div className="grow-[54] basis-0" />
            <div className="-mx-px flex grow-[350] basis-0 items-center justify-center border border-[#a0a0a0] bg-[#dcdcdc]">
              <span className="h-2.5 w-[9px] border-y-2 border-[#777]">
                <span className="mt-0.5 block border-t-2 border-[#777]" />
              </span>
            </div>
            <div className="grow-[123] basis-0" />
            <button type="button" aria-label="下移" className={`-mx-px ${scrollButton}`}>
              <Chevron d="M1 3l4 4 4-4" />
            </button>
          </div>
        </div>
        {/* Horizontal scrollbar */}
        <div className="mr-[21px] flex h-[21px] shrink-0 border-y border-[#b8b8b8] bg-white">
          <button type="button" aria-label="左移" className={`-my-px ${scrollButton}`}>
            <Chevron d="M7 1L3 5l4 4" />
          </button>
          <div className="-my-px flex grow-[89] basis-0 items-center justify-center border border-[#a0a0a0] bg-[#dcdcdc]">
            <span className="flex h-[9px] w-2.5 justify-center border-x-2 border-[#777]">
              <span className="border-l-2 border-[#777]" />
            </span>
          </div>
          <div className="grow-[201] basis-0" />
          <button type="button" aria-label="右移" className={`-my-px ${scrollButton}`}>
            <Chevron d="M3 1l4 4-4 4" />
          </button>
        </div>
      </div>
      <div className="my-px h-[5px] shrink-0 border border-[#b8b8b8] bg-[#e0e0e0]" />
      <Section title="相依性" />
      <Section title="细节" />
      <div className="h-[5px] shrink-0" />
    </aside>
  );
}

/* ---------- graphics window ---------- */

function GraphicsWindow() {
  return (
    <main className="relative min-w-0 grow bg-white">
      <svg viewBox="417 196 539 716" className="absolute inset-0 size-full" fill="none" role="img" aria-label="加工部件">
        <g transform="translate(480 400) scale(0.33333)" strokeWidth={2.6} strokeLinejoin="round">
          {/* side wall and slot */}
          <path
            d="M53 115L80 121C110 128 130 145 143 185L172 318C182 380 205 440 270 508C300 535 320 545 344 557L440 602L570 653C620 672 700 687 749 694V725L137 586V322L99 316L94 575L46 564Z"
            fill="#b06a00"
            stroke="#40301c"
          />
          <path d="M99 316L142 323L137 554L94 575Z" fill="#e08600" stroke="#40301c" />
          {/* top faces */}
          <path
            d="M53 115L180 43C220 44 260 70 270 110L310 275C325 350 390 450 470 487L590 531L702 579C760 594 820 608 877 624L749 694C700 687 620 672 570 653L440 602L344 557C320 545 300 535 270 508C205 440 182 380 172 318L143 185C130 145 110 128 80 121Z"
            fill="url(#face)"
            stroke="#40301c"
          />
          <path d="M749 694L877 624V654L749 725Z" fill="#d98200" stroke="#40301c" />
          <path
            d="M80 121L206 49M165 181L274 122M182 352L308 282M344 557L472 486M570 653L693 580M584 656L708 582"
            stroke="#40301c"
          />
          {/* groove */}
          <path
            d="M236 224C200 250 195 320 218 360C240 400 270 410 306 420C360 440 410 480 450 500C480 520 485 540 462 565"
            stroke="#40301c"
            strokeWidth={9}
            strokeLinecap="round"
          />
          <path
            d="M236 224C200 250 195 320 218 360C240 400 270 410 306 420C360 440 410 480 450 500C480 520 485 540 462 565"
            stroke="#e09a10"
            strokeWidth={4}
            strokeLinecap="round"
          />
          {/* dimensions */}
          <path d="M148 81L617 187" stroke="#2c6868" strokeDasharray="14 3" />
          <path d="M370 134C372 180 350 230 310 262C290 278 270 282 246 284" stroke="#182838" />
          <path d="M602 188C604 320 590 470 565 582" stroke="#182838" />
          <path d="M370 134l-5 26h9zM246 284l24-6 2 9zM602 188l-5 28h10zM565 582l-1-26 10 2z" fill="#182838" />
          <text x={330} y={230} fontSize={30} fill="#1818e0" transform="rotate(-58 330 230)">
            75°
          </text>
          <text x={585} y={408} fontSize={30} fill="#1818e0" transform="rotate(-84 585 408)">
            10°
          </text>
          {/* machine coordinate system */}
          <path d="M177 490V250" stroke="#6474c8" strokeWidth={8} />
          <path d="M178 198l11 58c-6 6-16 6-22 0z" fill="#7084d8" />
          <path d="M177 490L300 422" stroke="#88c890" strokeWidth={7} />
          <path d="M340 399l-46 8 14 24z" fill="#a0d8a0" stroke="#60a878" />
          <circle cx={304} cy={419} r={10} fill="#509060" />
          <path d="M177 490L390 538" stroke="#d88070" strokeWidth={7} />
          <path d="M442 552l-56-22-6 18z" fill="#e88c80" />
          <circle cx={177} cy={490} r={5} fill="#b8a8d8" />
          <text x={113} y={196} fontSize={38} fill="#3030e0">
            ZM
          </text>
          <text x={276} y={390} fontSize={38} fill="#50a050">
            YM
          </text>
          <text x={388} y={592} fontSize={38} fill="#d03030">
            XM
          </text>
        </g>
        {/* view triad */}
        <g transform="translate(200 660) scale(0.33333)" strokeWidth={3}>
          <path d="M798 551L824 535L872 545V600L846 614L798 602Z" fill="#d4d4d4" stroke="#aaa" />
          <path d="M798 551L846 562L872 545M846 562V614M824 535V590L798 602M824 590L872 600" stroke="#b8b8b8" />
          <path d="M792 605L846 576" stroke="#98c098" strokeWidth={5} />
          <text x={838} y={584} fontSize={30} fill="#98c098">
            Y
          </text>
          <path d="M793 604V530" stroke="#1030d0" strokeWidth={7} />
          <path d="M793 512l8 28h-16z" fill="#1030d0" />
          <path d="M793 605L850 617" stroke="#d02020" strokeWidth={7} />
          <path d="M875 623l-24-12-4 14z" fill="#d02020" />
          <circle cx={791} cy={606} r={12} fill="#b4b4b4" />
          <circle cx={788} cy={602} r={5} fill="#eee" />
          <text x={782} y={515} fontSize={34} fill="#2040e0">
            Z
          </text>
          <text x={876} y={640} fontSize={34} fill="#d03030">
            X
          </text>
        </g>
      </svg>

      {/* Network speed widget docked on the screen edge */}
      <div className="absolute top-[383px] -right-1 flex h-[54px] w-[49px] flex-col justify-center gap-1.5 overflow-hidden rounded-l-full border-2 border-r-0 border-[#60646c] bg-[#2c2f36] pl-3 text-sm leading-5 text-[#e0e0e0]">
        <span className="flex items-center gap-[18px]">
          <svg viewBox="0 0 10 10" className="size-2.5 shrink-0" fill="#48b0d8" aria-hidden="true">
            <path d="M5 0l5 5H6.500v4h-3V5H0z" />
          </svg>
          0
        </span>
        <span className="flex items-center gap-[18px]">
          <svg viewBox="0 0 10 10" className="size-2.5 shrink-0" fill="#40b048" aria-hidden="true">
            <path d="M5 10L0 5h3.500V1h3v4H10z" />
          </svg>
          0
        </span>
      </div>
    </main>
  );
}

/* ---------- bottom toolbar ---------- */

function BigTool({
  label,
  wrap = false,
  pressed = false,
  children,
}: {
  label: string;
  wrap?: boolean;
  pressed?: boolean;
  children: ReactNode;
}) {
  return (
    <button
      type="button"
      className={`flex h-[82px] w-[90px] shrink-0 flex-col items-center gap-1 border pt-0.5 text-sm leading-5 text-[#111] ${
        wrap ? "px-1.5" : ""
      } ${pressed ? "border-[#a8c4bc] bg-[#c8d7d6]" : "border-transparent"}`}
    >
      {children}
      <span>{label}</span>
    </button>
  );
}

function ViewToolbar() {
  return (
    <div className="flex h-[87px] shrink-0 border-t border-b border-t-[#fafafa] border-b-[#a8a8a8] bg-[#f0f0f0]">
      <Group>
        <Grip />
        <BigTool label="程序顺序视图" wrap pressed>
          <Art vb="123 36 96 96">
            <path d="M127 43h42v40h-42z" fill="#fff" stroke="#3848b0" />
            <path d="M156 66l12-2h18v44l-26-2c-4-8-4-28-4-40z" fill="#fff" stroke="#3848b0" />
            <path d="M133 52h28M133 62h28M133 72h20M162 78h20M162 88h20M162 98h20" stroke="#222" strokeWidth={4} strokeDasharray="5 6" />
            <NodeTree x={187} y={79} />
          </Art>
        </BigTool>
        <BigTool label="机床视图">
          <Art vb="391 36 96 96">
            <path d="M420 42h23v34h-23z" fill="url(#steel)" />
            <path d="M412 76l16-10 14 8-6 18-20 2z" fill="#f0b048" stroke="#804c10" />
            <path d="M396 84l14-6 8 8v34l-10 8h-12z" fill="#7088c8" />
            <path d="M396 104l22-14M398 120l20-14" stroke="#dce8fc" strokeWidth={5} />
            <path d="M396 112l22-14" stroke="#304080" strokeWidth={4} />
            <NodeTree x={450} y={79} />
          </Art>
        </BigTool>
        <BigTool label="几何视图">
          <Art vb="660 36 96 96">
            <path d="M668 52l20-11 25 5v30l-18 10-27-6z" fill="url(#blue)" stroke="#5058a8" />
            <path d="M668 52l26 6 19-12M694 58v28" stroke="#9098e8" />
            <path d="M670 66l14-5 10 4v12l-16 8z" fill="#f8d848" stroke="#e04828" />
            <circle cx={673} cy={74} r={8} fill="#f8c040" stroke="#e04828" />
            <NodeTree x={723} y={76} />
          </Art>
        </BigTool>
        <BigTool label="加工方法视图" wrap>
          <Art vb="930 36 96 96">
            <path d="M934 42c8 14 28 14 36 0 8 14 28 14 36 0v22h-72z" fill="#d8e8f8" stroke="#30588c" />
            <path d="M934 72l5 12 7-12 7 12 7-12 7 12 7-12 5 12 5-12v23h-50z" fill="#d8e8f8" stroke="#30588c" />
            <NodeTree x={993} y={76} />
          </Art>
        </BigTool>
        <Overflow />
      </Group>

      <div role="toolbar" className="flex grow items-center">
        <Grip />
        <BigTool label="拔模分析">
          <Art vb="1269 36 96 96">
            <path d="M1272 96c0-28 20-52 44-57l40 26-26 24-14 38c-20-2-40-12-44-31z" fill="url(#draft)" />
            <path d="M1307 62v44l40 16M1307 62l48 28M1307 106l48-18" stroke="#c83028" />
            <g fill="#f4f040" stroke="#402818">
              <path d="M1303 58h9v9h-9zM1303 100h9v9h-9zM1351 85h9v9h-9zM1342 118h9v9h-9z" />
            </g>
            <circle cx={1328} cy={70} r={6} fill="#d02828" />
            <circle cx={1346} cy={106} r={6} fill="#d02828" />
            <circle cx={1326} cy={90} r={6} fill="#d02828" />
          </Art>
        </BigTool>
        <Drop label="拔模分析选项" />
        <BigTool label="点">
          <Art vb="137 36 96 96">
            <path d="M185 48v68M152 82h66" stroke="#222" />
          </Art>
        </BigTool>
        <Drop label="点选项" />
        <BigTool label="抽取几何特征">
          <Art vb="441 36 96 96">
            <path d="M451 55l20-14h58l-22 21z" fill="#f4e070" stroke="#c89038" />
            <path d="M491 68l14 15h-8v15h-12V83h-8z" fill="#f08828" stroke="#b85010" />
            <path d="M451 104l14-12h66v22l-14 15h-66z" fill="url(#pale)" stroke="#4850c8" />
            <path d="M451 106h66l14-14M517 106v23" stroke="#4850c8" />
          </Art>
        </BigTool>
        <Drop label="抽取选项" />
        <BigTool label="修补开口">
          <Art vb="747 36 96 96">
            <path d="M750 124l18-28h72l-20 28z" fill="#f0d860" stroke="#c09028" />
            <ellipse cx={794} cy={111} rx={22} ry={9} fill="#fff" stroke="#c83828" />
            <path d="M772 54v56M816 54v56" stroke="#3038c8" />
            <path d="M794 62v46" stroke="#a0a8f0" strokeWidth={10} />
            <ellipse cx={794} cy={54} rx={22} ry={10} fill="#f4e050" stroke="#d83828" />
          </Art>
        </BigTool>
        <BigTool label="同步建模工具条" wrap>
          <Art vb="1014 36 96 96">
            <path d="M1018 48l30-10 24 4v54l20 2 8 10-16 10-66-10z" fill="url(#blue)" stroke="#3858a8" />
            <path d="M1018 108l30-8 50 4-14 14z" fill="#3050a0" />
            <path d="M1050 50l36-6v46l-36 14z" fill="#f8d070" stroke="#e08830" />
            <path d="M1092 116h16v14M1092 130l14-12" stroke="#444" />
          </Art>
        </BigTool>
        <Overflow more className="ml-auto w-[18px]" />
      </div>
    </div>
  );
}

function Watermark() {
  return (
    <div className="pointer-events-none absolute right-1.5 bottom-1 flex items-start gap-2.5 opacity-85">
      <svg viewBox="532 64 264 296" className="h-[99px] w-[88px] shrink-0" aria-hidden="true">
        <path d="M664 68L790 138V284L664 356L538 284V138Z" fill="#fff" />
        <path d="M664 74L784 142V280L664 350L544 280V142Z" fill="#5088cc" />
        <path d="M710 100L784 142V280L664 350L602 314C660 310 740 300 750 230C756 180 740 130 710 100Z" fill="#54bcea" />
        <path d="M606 316C660 326 740 290 784 230V280L664 350Z" fill="#54bcea" />
        <path d="M704 96C730 130 740 170 728 210M544 180C560 150 610 120 656 134M600 130C560 190 590 290 606 316M610 306C660 326 740 290 784 230" fill="none" stroke="#fff" strokeWidth={5} />
        <path d="M664 134L734 174V246L664 288L596 246V174Z" fill="#fff" />
        <path d="M664 148L720 178L664 210L610 178Z" fill="#5088cc" />
        <path d="M610 184L660 214V272L610 244Z" fill="#5088cc" />
        <path d="M720 184L668 214V272L720 244Z" fill="#54bcea" />
      </svg>
      <div className="flex flex-col pt-4 text-[#54bcea] [-webkit-text-stroke:3px_white] [paint-order:stroke_fill]">
        <span className="text-[46px] leading-[46px] font-bold">3D世界网</span>
        <span className="font-['DejaVu_Sans',sans-serif] text-lg leading-5 font-bold">WWW.3DSJW.COM</span>
      </div>
    </div>
  );
}

export default function App() {
  return (
    <div className="relative flex h-screen flex-col overflow-hidden bg-[#5c8880] font-['Noto_Sans','Noto_Sans_CJK_SC',sans-serif]">
      <Gradients />
      <div className="flex min-h-0 grow flex-col border border-[#a4a4a4] bg-[#f5f5f5] px-[3px]">
        <TitleBar />
        <MenuBar />
        <StandardRow />
        <MachiningRow />
        <SelectionRow />
        <div className="flex min-h-0 grow border-t border-[#88949a]">
          <ResourceRail />
          <Navigator />
          <GraphicsWindow />
        </div>
        <ViewToolbar />
        <footer className="flex h-[22px] shrink-0 items-center justify-end pr-[55px]">
          <Art vb="1214 290 50 50" className="size-4">
            <path d="M1226 302h28v26h-28z" fill="#6098e0" stroke="#404850" />
            <path d="M1216 322v14h10M1262 322v14h-10M1262 304v-12h-10M1216 304v-12h10" stroke="#999" />
          </Art>
        </footer>
      </div>
      <div className="h-2 shrink-0 border-b border-[#b0b0b0]" />
      <Watermark />
    </div>
  );
}
